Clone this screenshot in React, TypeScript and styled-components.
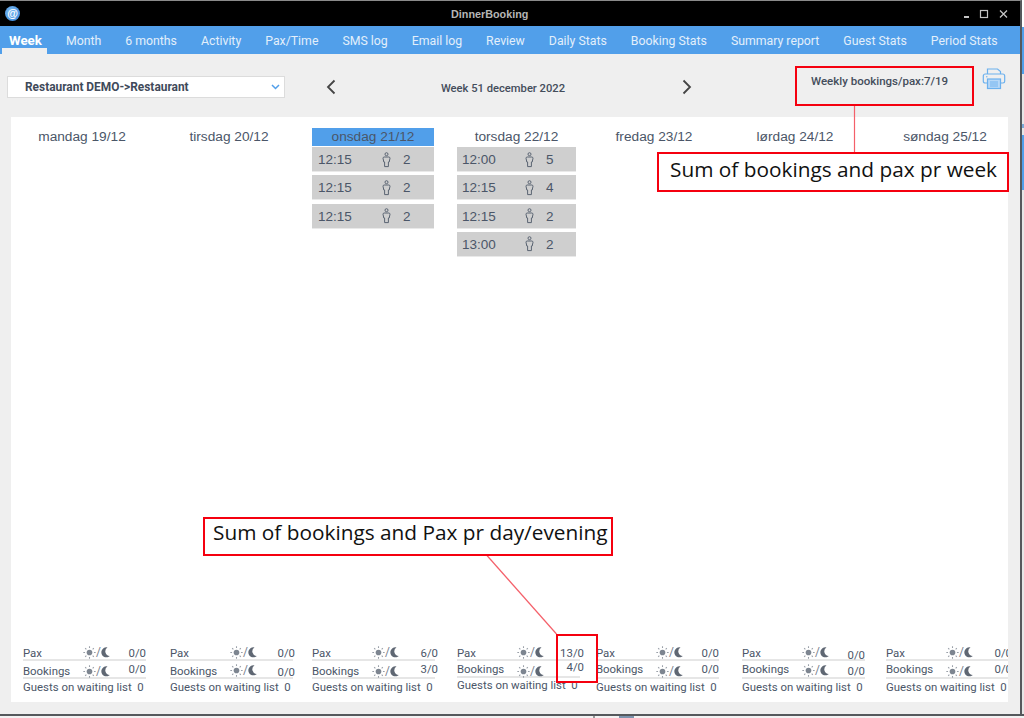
import React from "react";
import styled, { createGlobalStyle } from "styled-components";

const GlobalStyle = createGlobalStyle`
  html, body {
    margin: 0;
    padding: 0;
    width: 1024px;
    height: 718px;
    overflow: hidden;
    background: #fff;
  }
`;

const TEXT = "#4b5668";
const BLUE = "#519fea";
const RED = "#f5000f";

const Page = styled.div`
  position: relative;
  width: 1024px;
  height: 718px;
  display: flex;
  flex-direction: column;
  font-family: Roboto, "Liberation Sans", sans-serif;
  overflow: hidden;
`;

const Main = styled.div`
  display: flex;
  height: 714px;
`;

const Window = styled.div`
  width: 1020px;
  display: flex;
  flex-direction: column;
  background: #efefef;
  border-top: 1px solid #8a8a8a;
  border-right: 2px solid #55585c;
  box-sizing: content-box;
  overflow: hidden;
`;

const BehindStrip = styled.div`
  flex: 1;
  background: linear-gradient(
    to bottom,
    #fff 0 27px,
    ${BLUE} 27px 74px,
    #e6e6e6 74px 124px,
    #7aa9d8 124px 128px,
    #e6e6e6 128px 135px,
    ${BLUE} 135px 190px,
    #e6e6e6 190px
  );
`;

const TitleBar = styled.div`
  height: 25px;
  flex: none;
  background: #000;
  display: flex;
  align-items: center;
  padding: 0 11px 0 5px;
`;

const Logo = styled.div`
  width: 15px;
  height: 15px;
  border-radius: 50%;
  background: radial-gradient(circle at 40% 35%, #7fbcf3, #2e7fd4);
  color: #fff;
  font: bold 11px/14px "Liberation Sans", sans-serif;
  text-align: center;
`;

const Title = styled.div`
  flex: none;
  width: 78px;
  margin-left: 431px;
  color: #b5b5b5;
  font: bold 10.8px "Liberation Sans", sans-serif;
  white-space: nowrap;
`;

const WindowButtons = styled.div`
  margin-left: auto;
  display: flex;
  align-items: center;
  gap: 7px;
`;

const TabBar = styled.div`
  height: 28px;
  flex: none;
  display: flex;
  gap: 24px;
  padding-left: 9px;
  background: ${BLUE};
`;

const Tab = styled.div<{ $active?: boolean }>`
  position: relative;
  height: 28px;
  line-height: 30px;
  font-size: ${(p) => (p.$active ? "13.3px" : "12.3px")};
  font-weight: ${(p) => (p.$active ? 700 : 400)};
  color: ${(p) => (p.$active ? "#fff" : "#e3effb")};
  white-space: nowrap;

  ${(p) =>
    p.$active &&
    `
    &::after {
      content: "";
      position: absolute;
      left: -7px;
      right: -5px;
      bottom: 0;
      height: 6px;
      background: #efefef;
    }
  `}
`;

const Toolbar = styled.div`
  height: 63px;
  flex: none;
  display: flex;
  padding-left: 7px;
  box-sizing: border-box;
  color: ${TEXT};
`;

const Select = styled.div`
  width: 278px;
  height: 22px;
  margin-top: 22px;
  box-sizing: border-box;
  display: flex;
  align-items: center;
  justify-content: space-between;
  padding: 0 4px 0 17px;
  background: #fff;
  border: 1px solid #dcdcdc;
  font-size: 11.9px;
  font-weight: 700;
  color: #3f4a5a;
`;

const WeekNav = styled.div`
  width: 368px;
  height: 24px;
  margin: 21px 0 0 40px;
  display: flex;
  align-items: center;
  justify-content: space-between;
`;

const WeekLabel = styled.div`
  font-size: 11.2px;
  font-weight: 500;
  color: #444d5b;
  padding: 3px 12px 0 0;
`;

const WeeklySum = styled.div`
  margin: 21px 0 0 118px;
  width: 171px;
  font-size: 11.5px;
  font-weight: 500;
  line-height: 13px;
  color: #444d5b;
  white-space: nowrap;
`;

const PrintButton = styled.div`
  margin-top: 13px;
  height: 24px;
`;

const Panel = styled.div`
  flex: 1;
  margin: 0 12px 12px 11px;
  padding: 11px 0 0 12px;
  background: #fff;
  display: flex;
  flex-direction: column;
  overflow: hidden;
`;

const COLUMNS = "147px 142px 145px 139px 146px 144px 1fr";

const DaysGrid = styled.div`
  display: grid;
  grid-template-columns: ${COLUMNS};
`;

const DayColumn = styled.div<{ $width: number }>`
  width: ${(p) => p.$width}px;
  display: flex;
  flex-direction: column;
  gap: 3.33px;
`;

const DayHeader = styled.div<{ $today?: boolean }>`
  height: 18px;
  margin-bottom: -2.33px;
  text-align: center;
  font: 13.7px/18px "Liberation Sans", sans-serif;
  color: ${TEXT};
  background: ${(p) => (p.$today ? BLUE : "transparent")};
  white-space: nowrap;
`;

const BookingRow = styled.div<{ $timeWidth: number }>`
  height: 25px;
  flex: none;
  display: grid;
  grid-template-columns: ${(p) => p.$timeWidth}px 22px 1fr;
  align-items: center;
  padding: 1px 0 0 ${(p) => (p.$timeWidth < 63 ? 5 : 6)}px;
  background: #cfcfcf;
  border-bottom: 1px solid #e9e9e9;
  box-sizing: border-box;
  font: 13.5px "Liberation Sans", sans-serif;
  color: ${TEXT};
`;

const StatsGrid = styled.div`
  margin-top: auto;
  display: grid;
  grid-template-columns: ${COLUMNS};
  padding-bottom: 8px;
`;

const StatColumn = styled.div`
  width: 123px;
`;

const StatRow = styled.div<{ $height: number }>`
  height: ${(p) => p.$height}px;
  display: grid;
  grid-template-columns: 60px 1fr auto;
  box-sizing: border-box;
  border-bottom: 2px solid #e6e6e6;
  font-size: 11.4px;
  color: ${TEXT};
`;

const StatLabel = styled.span<{ $top?: number }>`
  margin-top: ${(p) => p.$top ?? 0}px;
  line-height: 14px;
  white-space: nowrap;
`;

const StatIcon = styled.span<{ $top?: number }>`
  margin-top: ${(p) => p.$top ?? 0}px;
  height: 14px;
  display: flex;
  align-items: center;
  font-size: 12px;
  line-height: 14px;
  color: #7a828e;
`;

const StatValue = styled.span<{ $top?: number; $over: number }>`
  margin-top: ${(p) => p.$top ?? 0}px;
  margin-right: ${(p) => -p.$over}px;
  line-height: 14px;
  white-space: nowrap;
`;

const WaitingRow = styled.div<{ $top: number }>`
  margin-top: ${(p) => p.$top}px;
  font-size: 11.4px;
  line-height: 14px;
  color: ${TEXT};
  white-space: nowrap;
`;

const BottomEdge = styled.div`
  height: 4px;
  flex: none;
  background: #f2f2f2;
  border-top: 2px solid #55585c;
  box-sizing: border-box;
  display: flex;
`;

const EdgeBit = styled.div<{ $left: number; $width: number; $color: string }>`
  margin-left: ${(p) => p.$left}px;
  width: ${(p) => p.$width}px;
  background: ${(p) => p.$color};
`;

const Callout = styled.div<{ $x: number; $y: number; $w: number; $h: number }>`
  position: absolute;
  left: ${(p) => p.$x}px;
  top: ${(p) => p.$y}px;
  width: ${(p) => p.$w}px;
  height: ${(p) => p.$h}px;
  box-sizing: border-box;
  border: 2px solid ${RED};
`;

const CalloutNote = styled(Callout)<{ $line: number; $indent: number }>`
  background: #fff;
  padding-left: ${(p) => p.$indent}px;
  font: 20.8px/${(p) => p.$line}px "Open Sans", sans-serif;
  color: #111;
  white-space: nowrap;
`;

const Leaders = styled.svg`
  position: absolute;
  left: 0;
  top: 0;
  pointer-events: none;
`;

const Chevron = ({ dir }: { dir: "left" | "right" }) => (
  <svg width="12" height="16" viewBox="0 0 12 16" fill="none" stroke="#444" strokeWidth="1.8">
    <path d={dir === "left" ? "M9.5 1.5 3 8l6.5 6.5" : "M2.5 1.5 9 8l-6.5 6.5"} />
  </svg>
);

const PersonIcon = () => (
  <svg width="11" height="16" viewBox="0 0 11 16" fill="none" stroke="#5a6472" strokeWidth="1">
    <circle cx="5.5" cy="2.2" r="1.5" />
    <path d="M3.2 5h4.6c.8 0 1.2.5 1.2 1.2L8.2 10H7.4v4.6H3.6V10h-.8L2 6.2C2 5.5 2.4 5 3.2 5z" />
  </svg>
);

const SunMoon = () => (
  <>
    <svg width="13" height="13" viewBox="0 0 12 12" stroke="#9aa0a9" fill="#7d8590" strokeWidth="1">
      <circle cx="6" cy="6" r="2.6" stroke="none" />
      <path d="M6 .3v1.6M6 10.1v1.6M.3 6h1.6M10.1 6h1.6M2 2l1.1 1.1M8.9 8.9 10 10M2 10l1.1-1.1M8.9 3.1 10 2" />
    </svg>
    <span>/</span>
    <svg width="9" height="11" viewBox="0 0 9 11">
      <path d="M6.5.5A5 5 0 1 0 8.8 9 4.6 4.6 0 0 1 6.5.5z" fill="#5f6773" />
    </svg>
  </>
);

const PrinterIcon = () => (
  <svg width="24" height="24" viewBox="0 0 24 24" fill="none" stroke="#6cb1ee" strokeWidth="1.2">
    <path d="M5.5 7V2h10l3 2.5V7" />
    <path d="M5 16H3c-1 0-1.7-.7-1.7-1.7V9c0-1.2.8-2 2-2h17.4c1.2 0 2 .8 2 2v5.3c0 1-.7 1.7-1.7 1.7h-2" />
    <rect x="5.5" y="12" width="13" height="9.5" fill="#b7d8f7" />
    <path d="M8 15h8M8 17h8M8 19h8" strokeWidth=".9" />
    <circle cx="4.8" cy="9.8" r=".7" fill="#6cb1ee" stroke="none" />
  </svg>
);

const tabs = [
  "Week",
  "Month",
  "6 months",
  "Activity",
  "Pax/Time",
  "SMS log",
  "Email log",
  "Review",
  "Daily Stats",
  "Booking Stats",
  "Summary report",
  "Guest Stats",
  "Period Stats",
];

type Booking = [string, number];

const days = [
  { name: "mandag 19/12", width: 118, timeWidth: 63, bookings: [] as Booking[] },
  { name: "tirsdag 20/12", width: 118, timeWidth: 63, bookings: [] as Booking[] },
  {
    name: "onsdag 21/12",
    width: 122,
    timeWidth: 63,
    today: true,
    bookings: [
      ["12:15", 2],
      ["12:15", 2],
      ["12:15", 2],
    ] as Booking[],
  },
  {
    name: "torsdag 22/12",
    width: 119,
    timeWidth: 62,
    bookings: [
      ["12:00", 5],
      ["12:15", 4],
      ["12:15", 2],
      ["13:00", 2],
    ] as Booking[],
  },
  { name: "fredag 23/12", width: 116, timeWidth: 63, bookings: [] as Booking[] },
  { name: "lørdag 24/12", width: 106, timeWidth: 63, bookings: [] as Booking[] },
  { name: "søndag 25/12", width: 118, timeWidth: 63, bookings: [] as Booking[] },
];

// the rows are not quite level between the columns in the real app
const stats = [
  { pax: "0/0", book: "0/0", paxTop: 0, bookLabel: 3, bookIcon: 3, bookTop: 1, h2: 18, wait: 1, over: 0 },
  { pax: "0/0", book: "0/0", paxTop: 0, bookLabel: 3, bookIcon: 2, bookTop: 4, h2: 18, wait: 1, over: 2 },
  { pax: "6/0", book: "3/0", paxTop: 0, bookLabel: 3, bookIcon: 3, bookTop: 1, h2: 18, wait: 1, over: 3 },
  { pax: "13/0", book: "4/0", paxTop: 0, bookLabel: 1, bookIcon: 3, bookTop: -1, h2: 17, wait: 0, over: 4 },
  { pax: "0/0", book: "0/0", paxTop: 0, bookLabel: 1, bookIcon: 3, bookTop: 1, h2: 18, wait: 1, over: 0 },
  { pax: "0/0", book: "0/0", paxTop: 2, bookLabel: 1, bookIcon: 2, bookTop: 3, h2: 18, wait: 1, over: 0 },
  { pax: "0/0", book: "0/0", paxTop: 0, bookLabel: 1, bookIcon: 3, bookTop: 1, h2: 18, wait: 1, over: 3 },
];

const App = () => {
  return (
    <Page>
      <GlobalStyle />
      <Main>
        <Window>
          <TitleBar>
            <Logo>@</Logo>
            <Title>DinnerBooking</Title>
            <WindowButtons>
              <svg width="46" height="10" viewBox="0 0 46 10" fill="none" stroke="#c4c4c4">
                <path d="M1 8h5" strokeWidth="2" />
                <rect x="17.5" y="1.5" width="7" height="7" strokeWidth="1.2" />
                <path d="M37 1.5l7 7M44 1.5l-7 7" strokeWidth="1.3" />
              </svg>
            </WindowButtons>
          </TitleBar>
          <TabBar>
            {tabs.map((t, i) => (
              <Tab key={t} $active={i === 0}>
                {t}
              </Tab>
            ))}
          </TabBar>
          <Toolbar>
            <Select>
              Restaurant DEMO-&gt;Restaurant
              <svg width="9" height="6" viewBox="0 0 9 6" fill="none" stroke={BLUE} strokeWidth="1.5">
                <path d="M1 1l3.5 3.5L8 1" />
              </svg>
            </Select>
            <WeekNav>
              <Chevron dir="left" />
              <WeekLabel>Week 51 december 2022</WeekLabel>
              <Chevron dir="right" />
            </WeekNav>
            <WeeklySum>Weekly bookings/pax:7/19</WeeklySum>
            <PrintButton>
              <PrinterIcon />
            </PrintButton>
          </Toolbar>
          <Panel>
            <DaysGrid>
              {days.map((d) => (
                <DayColumn key={d.name} $width={d.width}>
                  <DayHeader $today={d.today}>{d.name}</DayHeader>
                  {d.bookings.map(([time, pax], i) => (
                    <BookingRow key={i} $timeWidth={d.timeWidth}>
                      <span>{time}</span>
                      <PersonIcon />
                      <span>{pax}</span>
                    </BookingRow>
                  ))}
                </DayColumn>
              ))}
            </DaysGrid>
            <StatsGrid>
              {stats.map((s, i) => (
                <StatColumn key={i}>
                  <StatRow $height={15}>
                    <StatLabel>Pax</StatLabel>
                    <StatIcon $top={-1}>
                      <SunMoon />
                    </StatIcon>
                    <StatValue $top={s.paxTop} $over={s.over}>
                      {s.pax}
                    </StatValue>
                  </StatRow>
                  <StatRow $height={s.h2}>
                    <StatLabel $top={s.bookLabel}>Bookings</StatLabel>
                    <StatIcon $top={s.bookIcon}>
                      <SunMoon />
                    </StatIcon>
                    <StatValue $top={s.bookTop} $over={s.over}>
                      {s.book}
                    </StatValue>
                  </StatRow>
                  <WaitingRow $top={s.wait}>Guests on waiting list&nbsp;&nbsp;0</WaitingRow>
                </StatColumn>
              ))}
            </StatsGrid>
          </Panel>
        </Window>
        <BehindStrip />
      </Main>
      <BottomEdge>
        <EdgeBit $left={593} $width={2} $color="#9a9a9a" />
        <EdgeBit $left={24} $width={15} $color="#7c93ad" />
      </BottomEdge>

      <Leaders width="1024" height="718" viewBox="0 0 1024 718" fill="none" stroke="#f4606a" strokeWidth="1.2">
        <path d="M854.5 105v47" />
        <path d="M483 551l73.5 83" />
      </Leaders>
      <Callout $x={795} $y={66} $w={179} $h={40} />
      <CalloutNote $x={657} $y={152} $w={352} $h={40} $line={30} $indent={11}>
        Sum of bookings and pax pr week
      </CalloutNote>
      <CalloutNote $x={203} $y={517} $w={410} $h={39} $line={26} $indent={8}>
        Sum of bookings and Pax pr day/evening
      </CalloutNote>
      <Callout $x={556} $y={634} $w={42} $h={49} />
    </Page>
  );
};

export default App;
